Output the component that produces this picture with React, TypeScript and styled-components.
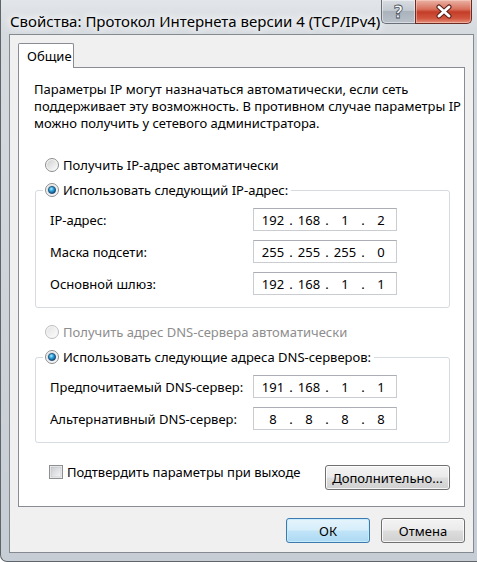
import React, { FC, useId } from "react";
import styled, { createGlobalStyle } from "styled-components";

const GlobalStyle = createGlobalStyle`
  html, body {
    margin: 0;
    padding: 0;
    background: #ffffff;
  }
  body {
    font-family: "Noto Sans", "Open Sans", sans-serif;
    font-size: 13px;
    color: #000;
  }
`;

const Window = styled.div`
  box-sizing: border-box;
  width: 477px;
  height: 562px;
  display: flex;
  flex-direction: column;
  background: linear-gradient(to bottom, #e2e5e9 0%, #d5dadf 34px, #c7cdd4 100%);
  border-left: 1px solid #5f646b;
  border-bottom: 1px solid #5f646b;
  border-radius: 0 0 0 7px;
  overflow: hidden;
`;

const TitleBar = styled.div`
  height: 34px;
  flex: none;
  display: flex;
  justify-content: space-between;
  align-items: flex-start;
`;

const Caption = styled.div`
  margin: 11px 0 0 9px;
  font-size: 15px;
  line-height: 20px;
  color: #000;
  text-shadow: 0 0 6px #fff, 0 0 10px #fff, 0 0 14px #fff;
  white-space: nowrap;
`;

const CaptionButtons = styled.div`
  display: flex;
  margin-right: 5px;
`;

const HelpButton = styled.div`
  box-sizing: border-box;
  width: 34px;
  height: 24px;
  display: flex;
  align-items: center;
  justify-content: center;
  border: 1px solid #6a7079;
  border-top: none;
  border-right: none;
  border-radius: 0 0 0 5px;
  background: linear-gradient(to bottom, #d9dde2 0%, #c4cad1 45%, #aab2bc 50%, #b9c0c8 100%);
  box-shadow: inset 0 0 0 1px rgba(255, 255, 255, 0.45);
  color: #f4f6f8;
  font-family: "DejaVu Sans", sans-serif;
  font-size: 17px;
  font-weight: bold;
  -webkit-text-stroke: 0.8px #4b525b;
`;

const CloseButton = styled.div`
  box-sizing: border-box;
  width: 57px;
  height: 24px;
  display: flex;
  align-items: center;
  justify-content: center;
  border: 1px solid #6b2a22;
  border-top: none;
  border-radius: 0 0 5px 0;
  background: linear-gradient(to bottom, #eab3a6 0%, #d8705c 40%, #c33d27 52%, #d2563f 80%, #e5907a 100%);
  box-shadow: inset 0 0 0 1px rgba(255, 220, 210, 0.45);
`;

const Client = styled.div`
  box-sizing: border-box;
  height: 519px;
  margin: 0 3px 0 8px;
  padding: 8px 8px 9px 8px;
  display: flex;
  flex-direction: column;
  background: #f0f0f0;
  border: 1px solid #858a91;
`;

const TabStrip = styled.div`
  height: 24px;
  flex: none;
  display: flex;
`;

const Tab = styled.div`
  box-sizing: border-box;
  position: relative;
  z-index: 2;
  width: 56px;
  height: 25px;
  padding-left: 8px;
  line-height: 24px;
  background: #fff;
  border: 1px solid #898c95;
  border-bottom: none;
  border-radius: 2px 2px 0 0;
`;

const Panel = styled.div`
  position: relative;
  z-index: 1;
  flex: 1;
  display: flex;
  flex-direction: column;
  padding: 13px 14px 0 15px;
  background: #fff;
  border: 1px solid #898c95;
`;

const Intro = styled.p`
  margin: 0;
  line-height: 17px;
  white-space: nowrap;
`;

const OptionRow = styled.label<{ $top: number; $disabled?: boolean }>`
  display: flex;
  align-items: center;
  gap: 4px;
  height: 20px;
  margin: ${p => p.$top}px 0 0 11px;
  color: ${p => (p.$disabled ? "#8d8d8d" : "#000")};
  white-space: nowrap;
`;

const GroupBox = styled.fieldset<{ $top: number }>`
  margin: ${p => p.$top}px 0 0 1px;
  padding: 8px 0 12px 14px;
  border: 1px solid #d5dbe0;
  border-radius: 3px;
  min-width: 0;
`;

const GroupLegend = styled.legend`
  margin-left: -7px;
  padding: 0 3px 0 2px;
  height: 20px;
  display: flex;
  align-items: center;
  gap: 4px;
  white-space: nowrap;
`;

const FieldGrid = styled.div`
  display: grid;
  grid-template-columns: 203px 144px;
  row-gap: 9px;
  align-items: center;
`;

const IpBox = styled.div`
  box-sizing: border-box;
  width: 144px;
  height: 23px;
  display: flex;
  align-items: center;
  padding-left: 4px;
  background: #fff;
  border: 1px solid #c9ccd1;
  border-top-color: #abafb5;
`;

const Octet = styled.span`
  width: 30px;
  text-align: center;
`;

const Dot = styled.span`
  width: 6px;
  text-align: center;
`;

const FooterRow = styled.div`
  display: flex;
  justify-content: space-between;
  align-items: flex-start;
  margin: 22px 0 0 15px;
`;

const CheckRow = styled.label`
  display: flex;
  align-items: center;
  gap: 4px;
  height: 14px;
  white-space: nowrap;
`;

const Button = styled.button<{ $width: number; $default?: boolean }>`
  box-sizing: border-box;
  width: ${p => p.$width}px;
  height: 25px;
  padding: 0;
  font: inherit;
  color: #000;
  border-radius: 3px;
  border: 1px solid ${p => (p.$default ? "#3d7bad" : "#707070")};
  background: ${p =>
    p.$default
      ? "linear-gradient(to bottom, #e5f4fc 0%, #d6eefb 48%, #c1e4f8 52%, #acd9f3 100%)"
      : "linear-gradient(to bottom, #f3f3f3 0%, #ebebeb 48%, #dddddd 52%, #d0d0d0 100%)"};
  box-shadow: inset 0 0 0 1px ${p => (p.$default ? "rgba(200, 235, 255, 0.9)" : "rgba(255, 255, 255, 0.8)")};
`;

const DialogButtons = styled.div`
  display: flex;
  justify-content: flex-end;
  gap: 11px;
  margin-top: 11px;
  height: 25px;
  flex: none;
`;

const Radio: FC<{ checked?: boolean; disabled?: boolean }> = ({ checked, disabled }) => {
  const id = useId().replace(/:/g, "");
  return (
    <svg width="14" height="14" viewBox="0 0 14 14" style={{ flex: "none" }}>
      <defs>
        <linearGradient id={`rf${id}`} x1="0" y1="0" x2="1" y2="1">
          <stop offset="0" stopColor={disabled ? "#e4e4e4" : "#d0d0d0"} />
          <stop offset="1" stopColor="#fbfbfb" />
        </linearGradient>
        <radialGradient id={`rd${id}`} cx="0.4" cy="0.35" r="0.7">
          <stop offset="0" stopColor="#a8ecff" />
          <stop offset="0.45" stopColor="#2b9fd9" />
          <stop offset="1" stopColor="#0d3f73" />
        </radialGradient>
      </defs>
      <circle cx="7" cy="7" r="6.5" fill="#f6f6f6" stroke={disabled ? "#bcbcbc" : "#8a8c8e"} />
      <circle cx="7" cy="7" r="5" fill={`url(#rf${id})`} />
      {checked && <circle cx="7" cy="7" r="3.6" fill={`url(#rd${id})`} stroke="#19476f" strokeWidth="0.8" />}
    </svg>
  );
};

const CheckBox: FC = () => {
  const id = useId().replace(/:/g, "");
  return (
    <svg width="14" height="14" viewBox="0 0 14 14" style={{ flex: "none" }}>
      <defs>
        <linearGradient id={`cb${id}`} x1="0" y1="0" x2="1" y2="1">
          <stop offset="0" stopColor="#c9ccd1" />
          <stop offset="1" stopColor="#f5f5f5" />
        </linearGradient>
      </defs>
      <rect x="0.5" y="0.5" width="13" height="13" fill="#f4f4f4" stroke="#8e8f91" />
      <rect x="2" y="2" width="10" height="10" fill={`url(#cb${id})`} stroke="#b5b8bc" strokeWidth="0.5" />
    </svg>
  );
};

const CloseGlyph: FC = () => (
  <svg width="18" height="15" viewBox="0 0 18 15">
    <path d="M4 3 L14 12 M14 3 L4 12" stroke="#5a1d16" strokeWidth="5" strokeLinecap="round" />
    <path d="M4 3 L14 12 M14 3 L4 12" stroke="#ffffff" strokeWidth="3" strokeLinecap="round" />
  </svg>
);

const IpField: FC<{ value: string }> = ({ value }) => {
  const parts = value.split(".");
  return (
    <IpBox>
      {parts.map((part, i) => (
        <React.Fragment key={i}>
          <Octet>{part}</Octet>
          {i < parts.length - 1 && <Dot>.</Dot>}
        </React.Fragment>
      ))}
    </IpBox>
  );
};

const ipRows = [
  { label: "IP-адрес:", value: "192.168.1.2" },
  { label: "Маска подсети:", value: "255.255.255.0" },
  { label: "Основной шлюз:", value: "192.168.1.1" },
];

const dnsRows = [
  { label: "Предпочитаемый DNS-сервер:", value: "191.168.1.1" },
  { label: "Альтернативный DNS-сервер:", value: "8.8.8.8" },
];

const App: FC = () => {
  return (
    <>
      <GlobalStyle />
      <Window>
        <TitleBar>
          <Caption>Свойства: Протокол Интернета версии 4 (TCP/IPv4)</Caption>
          <CaptionButtons>
            <HelpButton>?</HelpButton>
            <CloseButton>
              <CloseGlyph />
            </CloseButton>
          </CaptionButtons>
        </TitleBar>

        <Client>
          <TabStrip>
            <Tab>Общие</Tab>
          </TabStrip>

          <Panel>
            <Intro>
              Параметры IP могут назначаться автоматически, если сеть
              <br />
              поддерживает эту возможность. В противном случае параметры IP
              <br />
              можно получить у сетевого администратора.
            </Intro>

            <OptionRow $top={23}>
              <Radio />
              Получить IP-адрес автоматически
            </OptionRow>

            <GroupBox $top={5}>
              <GroupLegend>
                <Radio checked />
                Использовать следующий IP-адрес:
              </GroupLegend>
              <FieldGrid>
                {ipRows.map(row => (
                  <React.Fragment key={row.label}>
                    <span>{row.label}</span>
                    <IpField value={row.value} />
                  </React.Fragment>
                ))}
              </FieldGrid>
            </GroupBox>

            <OptionRow $top={14} $disabled>
              <Radio disabled />
              Получить адрес DNS-сервера автоматически
            </OptionRow>

            <GroupBox $top={5}>
              <GroupLegend>
                <Radio checked />
                Использовать следующие адреса DNS-серверов:
              </GroupLegend>
              <FieldGrid>
                {dnsRows.map(row => (
                  <React.Fragment key={row.label}>
                    <span>{row.label}</span>
                    <IpField value={row.value} />
                  </React.Fragment>
                ))}
              </FieldGrid>
            </GroupBox>

            <FooterRow>
              <CheckRow>
                <CheckBox />
                Подтвердить параметры при выходе
              </CheckRow>
              <Button $width={125}>Дополнительно...</Button>
            </FooterRow>
          </Panel>

          <DialogButtons>
            <Button $width={84} $default>
              ОК
            </Button>
            <Button $width={84}>Отмена</Button>
          </DialogButtons>
        </Client>
      </Window>
    </>
  );
};

export default App;
